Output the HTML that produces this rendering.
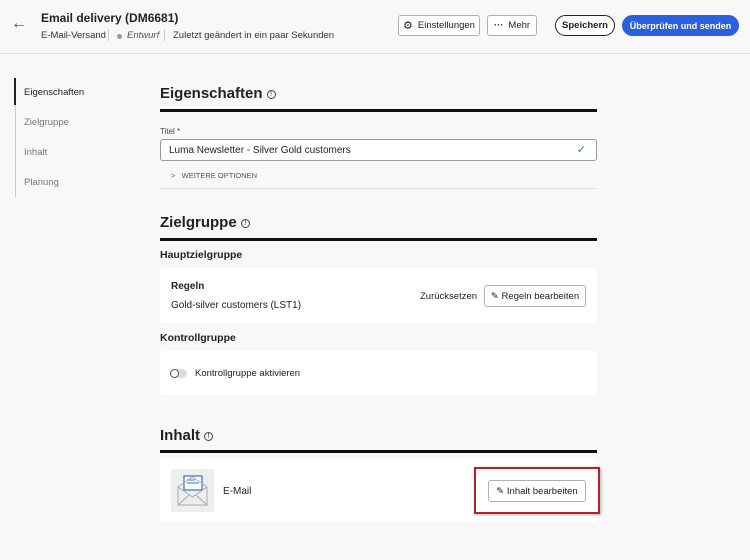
<!DOCTYPE html>
<html><head><meta charset="utf-8"><style>
*{box-sizing:border-box;margin:0;padding:0}
body{width:750px;height:560px;background:#f8f8f8;font-family:"Liberation Sans",sans-serif;color:#222;position:relative;overflow:hidden;font-size:10px}
.a{position:absolute;white-space:nowrap}
.hdr{position:absolute;left:0;top:0;width:750px;height:54px;background:#f8f8f8;border-bottom:1px solid #ddd}
.btn{position:absolute;border:1px solid #b0b0b0;border-radius:3px;background:#fff;font-size:9.5px;display:flex;align-items:center;justify-content:center;gap:5px;color:#222;white-space:nowrap}
.rule{position:absolute;left:160px;width:437px;height:3px;background:#111}
.card{position:absolute;left:160px;width:437px;background:#fff;border-radius:4px}
h2{position:absolute;font-size:15px;font-weight:600;left:160px;color:#222}
.info{display:inline-block;width:9px;height:9px;border:1px solid #444;border-radius:50%;font-size:7px;text-align:center;line-height:8px;vertical-align:middle;margin-left:4px;font-weight:normal}
h3{position:absolute;left:160px;font-size:10.5px;font-weight:bold}
</style></head><body>
<div class="hdr"></div>
<div class="a" style="left:11px;top:15px;font-size:16px;color:#444">&#8592;</div>
<div class="a" style="left:41px;top:11px;font-size:12px;font-weight:bold">Email delivery (DM6681)</div>
<div class="a" style="left:41px;top:30px;font-size:9.5px;color:#333">E-Mail-Versand</div>
<div class="a" style="left:108px;top:29px;width:1px;height:12px;background:#ccc"></div>
<div class="a" style="left:117px;top:34px;width:5px;height:5px;border-radius:50%;background:#999"></div>
<div class="a" style="left:127px;top:30px;font-size:9.5px;font-style:italic;color:#555">Entwurf</div>
<div class="a" style="left:164px;top:29px;width:1px;height:12px;background:#ccc"></div>
<div class="a" style="left:173px;top:30px;font-size:9.5px;color:#333">Zuletzt geändert in ein paar Sekunden</div>
<div class="btn" style="left:398px;top:15px;width:82px;height:21px"><span style="font-size:11px">⚙</span>Einstellungen</div>
<div class="btn" style="left:487px;top:15px;width:50px;height:21px"><b>···</b>Mehr</div>
<div class="btn" style="left:555px;top:15px;width:60px;height:21px;border:1.5px solid #222;border-radius:11px;font-weight:bold">Speichern</div>
<div class="btn" style="left:622px;top:15px;width:117px;height:21px;border:none;border-radius:11px;background:#2c5fdc;color:#fff;font-weight:bold;font-size:9px">Überprüfen und senden</div>

<div class="a" style="left:15px;top:78px;width:1px;height:119px;background:#ccc"></div>
<div class="a" style="left:14px;top:78px;width:2px;height:27px;background:#222"></div>
<div class="a" style="left:24px;top:87px;font-size:9.5px;color:#222">Eigenschaften</div>
<div class="a" style="left:24px;top:117px;font-size:9.5px;color:#777">Zielgruppe</div>
<div class="a" style="left:24px;top:147px;font-size:9.5px;color:#777">Inhalt</div>
<div class="a" style="left:24px;top:177px;font-size:9.5px;color:#777">Planung</div>

<h2 style="top:85px">Eigenschaften<span class="info">!</span></h2>
<div class="rule" style="top:109px"></div>
<div class="a" style="left:160px;top:127px;font-size:8px;color:#444">Titel *</div>
<div class="a" style="left:160px;top:139px;width:437px;height:22px;background:#fff;border:1px solid #999;border-radius:3px;font-size:10px;padding:5px 8px">Luma Newsletter - Silver Gold customers<span style="position:absolute;right:10px;top:3px;color:#2a8a6a;font-size:11px">✓</span></div>
<div class="a" style="left:171px;top:171px;font-size:7.5px;color:#555">&gt;&nbsp;&nbsp;&nbsp;WEITERE OPTIONEN</div>
<div class="a" style="left:160px;top:188px;width:437px;height:1px;background:#e0e0e0"></div>

<h2 style="top:214px">Zielgruppe<span class="info">!</span></h2>
<div class="rule" style="top:238px"></div>
<h3 style="top:249px">Hauptzielgruppe</h3>
<div class="card" style="top:268px;height:55px"></div>
<div class="a" style="left:171px;top:281px;font-size:10px;font-weight:bold">Regeln</div>
<div class="a" style="left:171px;top:300px;font-size:10px">Gold-silver customers (LST1)</div>
<div class="a" style="left:420px;top:291px;font-size:9.5px">Zurücksetzen</div>
<div class="btn" style="left:484px;top:285px;width:102px;height:22px">✎ Regeln bearbeiten</div>
<h3 style="top:332px">Kontrollgruppe</h3>
<div class="card" style="top:351px;height:44px"></div>
<div class="a" style="left:170px;top:369px;width:17px;height:9px;border-radius:5px;background:#ddd"></div>
<div class="a" style="left:170px;top:369px;width:9px;height:9px;border-radius:50%;border:1.5px solid #555;background:#fff"></div>
<div class="a" style="left:195px;top:368px;font-size:9.5px">Kontrollgruppe aktivieren</div>

<h2 style="top:427px">Inhalt<span class="info">!</span></h2>
<div class="rule" style="top:450px"></div>
<div class="card" style="top:457px;height:65px"></div>
<div class="a" style="left:171px;top:469px;width:43px;height:43px;background:#eee;border-radius:2px">
<svg width="43" height="43" viewBox="0 0 43 43"><rect x="13" y="7" width="18" height="14" fill="#fff" stroke="#2c6fd6" stroke-width="1.2"/><line x1="16" y1="11" x2="24" y2="11" stroke="#2c6fd6"/><line x1="16" y1="14" x2="28" y2="14" stroke="#2c6fd6"/><path d="M7 18 L21.5 8 L36 18 V36 H7 Z" fill="none" stroke="#aaa"/><path d="M7 18 L21.5 28 L36 18 M7 36 L18 26 M36 36 L25 26" fill="none" stroke="#aaa"/></svg></div>
<div class="a" style="left:223px;top:486px;font-size:10px">E-Mail</div>
<div class="a" style="left:474px;top:467px;width:126px;height:47px;border:2px solid #b5212b;box-shadow:1px 1px 3px rgba(0,0,0,.3)"></div>
<div class="btn" style="left:488px;top:480px;width:98px;height:22px">✎ Inhalt bearbeiten</div>
</body></html>
